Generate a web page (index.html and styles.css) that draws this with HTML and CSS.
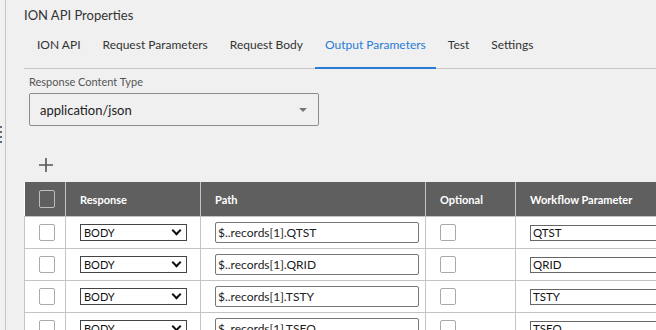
FILE: index.html
```html
<!DOCTYPE html>
<html lang="en">
<head>
    <meta charset="UTF-8">
    <meta name="viewport" content="width=device-width, initial-scale=1.0">
    <title>ION API Properties</title>
    <link rel="stylesheet" href="styles.css">
</head>
<body>
    <!-- Tay nắm kéo panel -->
    <div class="drag-handle">
        <span></span><span></span><span></span><span></span>
    </div>

    <div class="panel">
        <h1 class="panel-title">ION API Properties</h1>

        <div class="tabs">
            <div class="tab">ION API</div>
            <div class="tab">Request Parameters</div>
            <div class="tab">Request Body</div>
            <div class="tab active">Output Parameters</div>
            <div class="tab">Test</div>
            <div class="tab">Settings</div>
        </div>

        <div class="content">
            <label class="field-label">Response Content Type</label>
            <div class="dropdown">
                <span>application/json</span>
                <span class="dropdown-arrow"></span>
            </div>

            <button class="add-btn" title="Add">
                <svg width="16" height="16" viewBox="0 0 16 16">
                    <path d="M8 1v14M1 8h14" stroke="#555" stroke-width="1.6" fill="none"/>
                </svg>
            </button>
        </div>

        <table class="params">
            <colgroup>
                <col class="col-check">
                <col class="col-response">
                <col class="col-path">
                <col class="col-optional">
                <col class="col-param">
            </colgroup>
            <thead>
                <tr>
                    <th><span class="checkbox dark"></span></th>
                    <th>Response</th>
                    <th>Path</th>
                    <th>Optional</th>
                    <th>Workflow Parameter</th>
                </tr>
            </thead>
            <tbody>
                <tr>
                    <td><span class="checkbox"></span></td>
                    <td><div class="small-select">BODY<span class="chevron"></span></div></td>
                    <td><input class="path-input" type="text" value="$..records[1].QTST"></td>
                    <td><span class="checkbox"></span></td>
                    <td><input class="param-input" type="text" value="QTST"></td>
                </tr>
                <tr>
                    <td><span class="checkbox"></span></td>
                    <td><div class="small-select">BODY<span class="chevron"></span></div></td>
                    <td><input class="path-input" type="text" value="$..records[1].QRID"></td>
                    <td><span class="checkbox"></span></td>
                    <td><input class="param-input" type="text" value="QRID"></td>
                </tr>
                <tr>
                    <td><span class="checkbox"></span></td>
                    <td><div class="small-select">BODY<span class="chevron"></span></div></td>
                    <td><input class="path-input" type="text" value="$..records[1].TSTY"></td>
                    <td><span class="checkbox"></span></td>
                    <td><input class="param-input" type="text" value="TSTY"></td>
                </tr>
                <tr>
                    <td><span class="checkbox"></span></td>
                    <td><div class="small-select">BODY<span class="chevron"></span></div></td>
                    <td><input class="path-input" type="text" value="$..records[1].TSEQ"></td>
                    <td><span class="checkbox"></span></td>
                    <td><input class="param-input" type="text" value="TSEQ"></td>
                </tr>
            </tbody>
        </table>
    </div>
</body>
</html>
```

FILE: styles.css
```css
html, body {
    margin: 0;
    height: 100%;
    overflow: hidden;
}

body {
    background-color: #f0f0f0;
    font-family: Lato, "Open Sans", sans-serif;
    color: #333;
    position: relative;
}

.drag-handle {
    position: absolute;
    left: 0;
    top: 126px;
    display: flex;
    flex-direction: column;
    gap: 3px;
}

.drag-handle span {
    width: 2px;
    height: 2px;
    background-color: #5b6b82;
}

.panel {
    margin-left: 5px;
    height: 100%;
    border-left: 1px solid #c6c6c6;
    padding-left: 18px;
}

.panel-title {
    margin: 0;
    padding-top: 6px;
    font-size: 13px;
    font-weight: normal;
    color: #333;
    line-height: 18px;
}

.tabs {
    display: flex;
    border-bottom: 1px solid #c6c6c6;
    padding-left: 3px;
}

.tab {
    padding: 12px 10px 13px;
    margin-right: 2px;
    font-size: 12px;
    line-height: 18px;
    color: #333;
    border-bottom: 2px solid transparent;
    margin-bottom: -1px;
}

.tab.active {
    color: #2a7bd6;
    border-bottom-color: #2a7bd6;
}

.content {
    padding-left: 5px;
}

.field-label {
    display: block;
    margin-top: 6px;
    font-size: 11px;
    line-height: 14px;
    color: #555;
}

.dropdown {
    margin-top: 4px;
    width: 290px;
    height: 33px;
    box-sizing: border-box;
    border: 1px solid #8c8c8c;
    border-radius: 2px;
    display: flex;
    align-items: center;
    justify-content: space-between;
    padding: 0 11px 0 10px;
    font-size: 13px;
    color: #222;
}

.dropdown-arrow {
    width: 0;
    height: 0;
    border-left: 4px solid transparent;
    border-right: 4px solid transparent;
    border-top: 4px solid #777;
}

.add-btn {
    display: block;
    margin-top: 31px;
    margin-left: 9px;
    padding: 0;
    border: none;
    background: none;
    width: 16px;
    height: 16px;
    cursor: pointer;
}

.add-btn svg {
    display: block;
}

.params {
    margin-top: 9px;
    border-collapse: collapse;
    table-layout: fixed;
    width: 841px;
    background-color: #fff;
}

.col-check { width: 41px; }
.col-response { width: 135px; }
.col-path { width: 225px; }
.col-optional { width: 90px; }
.col-param { width: 350px; }

.params th {
    height: 34px;
    padding: 0 14px;
    background-color: #5f5f5f;
    color: #fff;
    font-size: 11px;
    font-weight: bold;
    text-align: left;
    border-left: 1px solid #c4c4c4;
    border-right: 1px solid #c4c4c4;
}

.params th:first-child {
    border-left: none;
}

.params td {
    height: 31px;
    padding: 0 14px;
    border: 1px solid #c4c4c4;
    vertical-align: middle;
}

.checkbox {
    display: block;
    width: 14px;
    height: 15px;
    border: 1px solid #a9a9a9;
    border-radius: 2px;
    background-color: #fff;
}

.checkbox.dark {
    height: 16px;
    background-color: transparent;
    border-color: #bdbdbd;
}

.small-select {
    width: 107px;
    height: 17px;
    box-sizing: border-box;
    border: 1px solid #444;
    display: flex;
    align-items: center;
    justify-content: space-between;
    padding: 0 4px 0 3px;
    font-size: 11px;
    color: #111;
}

.chevron {
    width: 5px;
    height: 5px;
    border-right: 2px solid #111;
    border-bottom: 2px solid #111;
    transform: rotate(45deg);
    margin-top: -4px;
    margin-right: 2px;
}

.path-input {
    display: block;
    width: 204px;
    height: 21px;
    box-sizing: border-box;
    border: 1px solid #777;
    border-radius: 2px;
    padding: 0 2px;
    font-family: Lato, sans-serif;
    font-size: 12px;
    color: #222;
}

.param-input {
    display: block;
    width: 200px;
    height: 16px;
    box-sizing: border-box;
    border: 1px solid #666;
    border-right: none;
    padding: 0 2px;
    font-family: Lato, sans-serif;
    font-size: 11.5px;
    color: #111;
}
```
